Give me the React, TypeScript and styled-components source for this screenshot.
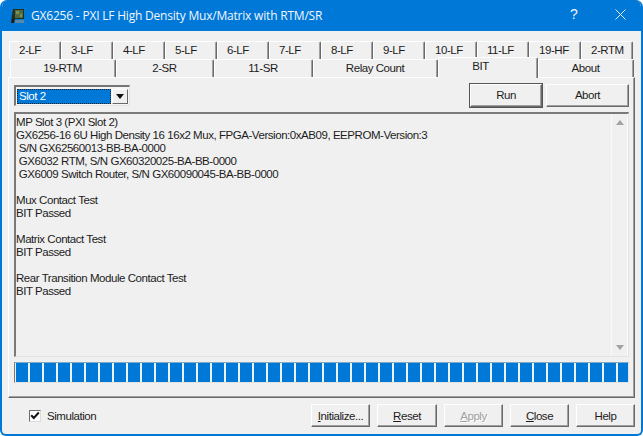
import React from 'react'
import styled, { createGlobalStyle } from 'styled-components'

const GlobalStyle = createGlobalStyle`
  html, body {
    margin: 0;
    padding: 0;
    background: #ffffff;
  }
  * {
    box-sizing: border-box;
  }
`

const Window = styled.div`
  width: 643px;
  height: 436px;
  display: flex;
  flex-direction: column;
  background: #f0f0f0;
  border: 2px solid #0078d7;
  border-top: 0;
  border-radius: 7px 7px 6px 6px;
  overflow: hidden;
  font-family: 'Liberation Sans', Arial, sans-serif;
  font-size: 11.5px;
  letter-spacing: -0.45px;
  color: #1c1c1c;
`

const TitleBar = styled.div`
  height: 31px;
  margin: 0 -2px;
  padding: 0 0 0 10px;
  display: flex;
  align-items: center;
  flex-shrink: 0;
  background: #0078d7;
  color: #f0f6fc;
  letter-spacing: 0;
`

const TitleText = styled.div`
  flex: 1;
  margin-left: 5px;
  font-family: 'Open Sans', 'Liberation Sans', sans-serif;
  font-size: 12px;
  letter-spacing: -0.2px;
`

const TitleGlyph = styled.div`
  width: 46px;
  margin-bottom: 3px;
  text-align: center;
  font-size: 14px;
`

const CloseGlyph = styled.div`
  width: 46px;
  margin-bottom: 2px;
  display: flex;
  justify-content: center;
`

const Content = styled.div`
  flex: 1;
  display: flex;
  flex-direction: column;
  padding: 10px 6px 0 6px;
`

const TabRow = styled.div<{ $inset: number }>`
  display: flex;
  height: 18px;
  align-items: flex-end;
  padding-left: ${(p) => p.$inset}px;
`

const Tab = styled.div<{ $width: number; $active?: boolean; $leading?: boolean }>`
  width: ${(p) => p.$width}px;
  height: ${(p) => (p.$active ? 21 : 18)}px;
  flex-shrink: 0;
  display: flex;
  align-items: center;
  justify-content: ${(p) => (p.$leading ? 'flex-start' : 'center')};
  padding-left: ${(p) => (p.$leading ? 9 : 0)}px;
  padding-right: ${(p) => (p.$active ? 15 : 1)}px;
  padding-bottom: ${(p) => (p.$active ? 4 : 1)}px;
  background: #f0f0f0;
  border-top: 1px solid #ffffff;
  border-left: 1px solid #ffffff;
  border-right: 1px solid #6a6a6a;
  box-shadow: inset -1px 0 0 #a0a0a0;
  border-radius: 2px 2px 0 0;
  margin-bottom: ${(p) => (p.$active ? -1 : 0)}px;
  position: relative;
  z-index: ${(p) => (p.$active ? 2 : 1)};
`

const Panel = styled.div`
  height: 321px;
  width: 627px;
  padding: 6px 5px 0 5px;
  display: flex;
  flex-direction: column;
  border-top: 1px solid #ffffff;
  border-left: 1px solid #ffffff;
  border-right: 1px solid #696969;
  border-bottom: 1px solid #696969;
  box-shadow: inset -1px -1px 0 #a0a0a0;
`

const TopControls = styled.div`
  display: flex;
  align-items: center;
  height: 22px;
`

const Combo = styled.div`
  width: 116px;
  height: 21px;
  display: flex;
  padding: 2px 1px 1px 1px;
  background: #f6f6f6;
  border-top: 2px solid #767676;
  border-left: 2px solid #767676;
  border-right: 1px solid #e3e3e3;
  border-bottom: 1px solid #e3e3e3;
  margin-right: auto;
`

const ComboValue = styled.div`
  flex: 1;
  padding-left: 2px;
  line-height: 14px;
  color: #ffffff;
  background: #0078d7;
  outline: 1px dotted #222;
  outline-offset: -1px;
`

const ComboArrow = styled.div`
  width: 16px;
  margin-left: 1px;
  display: flex;
  align-items: center;
  justify-content: center;
  background: #f0f0f0;
  border-top: 1px solid #ffffff;
  border-left: 1px solid #ffffff;
  border-right: 1px solid #696969;
  border-bottom: 1px solid #696969;
`

const ArrowDown = styled.div<{ $color?: string }>`
  width: 0;
  height: 0;
  border-left: 4px solid transparent;
  border-right: 4px solid transparent;
  border-top: 5px solid ${(p) => p.$color ?? '#111'};
`

const ArrowUp = styled.div`
  width: 0;
  height: 0;
  border-left: 4px solid transparent;
  border-right: 4px solid transparent;
  border-bottom: 5px solid #a3a3a3;
`

const Button = styled.div<{ $width: number; $default?: boolean; $disabled?: boolean }>`
  width: ${(p) => p.$width}px;
  height: 23px;
  flex-shrink: 0;
  display: flex;
  align-items: center;
  justify-content: center;
  color: ${(p) => (p.$disabled ? '#a0a0a0' : '#1c1c1c')};
  text-shadow: ${(p) => (p.$disabled ? '1px 1px 0 #ffffff' : 'none')};
  background: #f0f0f0;
  border-top: 1px solid #ffffff;
  border-left: 1px solid #ffffff;
  border-right: 1px solid #696969;
  border-bottom: 1px solid #696969;
  box-shadow: inset -1px -1px 0 #a0a0a0;
  outline: ${(p) => (p.$default ? '1px solid #555' : 'none')};
`

const RunButton = styled(Button)`
  margin-right: 4px;
`

const TextArea = styled.div`
  height: 245px;
  margin-top: 6px;
  display: flex;
  border-top: 2px solid #7a7a7a;
  border-left: 2px solid #7a7a7a;
  border-right: 1px solid #e3e3e3;
  border-bottom: 1px solid #e3e3e3;
`

const TextLines = styled.div`
  flex: 1;
  padding: 2px 0 0 0;
  line-height: 13px;
  white-space: pre;
`

const Line = styled.div`
  height: 13px;
`

const ScrollBar = styled.div`
  width: 17px;
  display: flex;
  flex-direction: column;
  justify-content: space-between;
  align-items: center;
  padding: 6px 0;
  background: #f0f0f0;
  border-left: 1px solid #fafafa;
  border-right: 1px solid #fafafa;
`

const Progress = styled.div`
  height: 21px;
  margin-top: 5px;
  display: flex;
  gap: 2px;
  padding: 0 1px;
  overflow: hidden;
  background: #eaf3fa;
  border-top: 1px solid #7fa9c8;
  border-left: 1px solid #7a7a7a;
  border-right: 1px solid #e3e3e3;
  border-bottom: 1px solid #e3e3e3;
`

const Segment = styled.div`
  width: 12px;
  flex-shrink: 0;
  background: #0078d7;
`

const Footer = styled.div`
  flex: 1;
  display: flex;
  align-items: flex-start;
  padding: 6px 0 0 0;
  gap: 7px;
  width: 627px;
`

const SimulationField = styled.label`
  display: flex;
  align-items: center;
  gap: 6px;
  height: 23px;
  padding-left: 21px;
  margin-right: auto;
`

const CheckBox = styled.div`
  width: 12px;
  height: 12px;
  display: flex;
  align-items: center;
  justify-content: center;
  background: #ffffff;
  border-top: 1px solid #6d6d6d;
  border-left: 1px solid #6d6d6d;
  border-right: 1px solid #dcdcdc;
  border-bottom: 1px solid #dcdcdc;
`

const AccessKey = styled.span`
  text-decoration: underline;
`

const BoardIcon = () => (
  <svg width="16" height="16" viewBox="0 0 16 16">
    <path d="M3 1h11v10H3z" fill="#26301f" />
    <path d="M5 2h8v8H5z" fill="#4e6b3b" />
    <path d="M6 3h3v3H6zM10 6h2v3h-2z" fill="#76905e" />
    <path d="M3 1L1 15h3l1-4H3z" fill="#1c211a" />
    <path d="M5 12h9v3H5z" fill="#5c88a8" />
  </svg>
)

const CloseIcon = () => (
  <svg width="11" height="11" viewBox="0 0 11 11">
    <path d="M0.5 0.5l10 10M10.5 0.5l-10 10" stroke="#e6f1fb" strokeWidth="1" fill="none" />
  </svg>
)

const CheckIcon = () => (
  <svg width="10" height="10" viewBox="0 0 10 10">
    <path d="M1.2 4.2l2.6 2.8 5-5.5" stroke="#111" strokeWidth="2" fill="none" />
  </svg>
)

const TOP_TABS = ['2-LF', '3-LF', '4-LF', '5-LF', '6-LF', '7-LF', '8-LF', '9-LF', '10-LF', '11-LF', '19-HF', '2-RTM']

const LOWER_TABS = [
  { label: '19-RTM', width: 106 },
  { label: '2-SR', width: 98 },
  { label: '11-SR', width: 99 },
  { label: 'Relay Count', width: 125 },
  { label: 'BIT', width: 100, active: true },
  { label: 'About', width: 96 },
]

const OUTPUT = [
  'MP Slot 3 (PXI Slot 2)',
  'GX6256-16 6U High Density 16 16x2 Mux, FPGA-Version:0xAB09, EEPROM-Version:3',
  ' S/N GX62560013-BB-BA-0000',
  ' GX6032 RTM, S/N GX60320025-BA-BB-0000',
  ' GX6009 Switch Router, S/N GX60090045-BA-BB-0000',
  '',
  'Mux Contact Test',
  'BIT Passed',
  '',
  'Matrix Contact Test',
  'BIT Passed',
  '',
  'Rear Transition Module Contact Test',
  'BIT Passed',
]

const SEGMENTS = Array.from({ length: 44 }, (_, i) => i)

export default function App() {
  return (
    <>
      <GlobalStyle />
      <Window>
        <TitleBar>
          <BoardIcon />
          <TitleText>GX6256 - PXI LF High Density Mux/Matrix with RTM/SR</TitleText>
          <TitleGlyph>?</TitleGlyph>
          <CloseGlyph>
            <CloseIcon />
          </CloseGlyph>
        </TitleBar>
        <Content>
          <TabRow $inset={1}>
            {TOP_TABS.map((tab) => (
              <Tab key={tab} $width={52} $leading>
                {tab}
              </Tab>
            ))}
          </TabRow>
          <TabRow $inset={2}>
            {LOWER_TABS.map((tab) => (
              <Tab key={tab.label} $width={tab.width} $active={tab.active}>
                {tab.label}
              </Tab>
            ))}
          </TabRow>
          <Panel>
            <TopControls>
              <Combo>
                <ComboValue>Slot 2</ComboValue>
                <ComboArrow>
                  <ArrowDown />
                </ComboArrow>
              </Combo>
              <RunButton $width={72} $default>
                Run
              </RunButton>
              <Button $width={83}>Abort</Button>
            </TopControls>
            <TextArea>
              <TextLines>
                {OUTPUT.map((line, i) => (
                  <Line key={i}>{line}</Line>
                ))}
              </TextLines>
              <ScrollBar>
                <ArrowUp />
                <ArrowDown $color="#a3a3a3" />
              </ScrollBar>
            </TextArea>
            <Progress>
              {SEGMENTS.map((s) => (
                <Segment key={s} />
              ))}
            </Progress>
          </Panel>
          <Footer>
            <SimulationField>
              <CheckBox>
                <CheckIcon />
              </CheckBox>
              Simulation
            </SimulationField>
            <Button $width={59}>
              <span>
                <AccessKey>I</AccessKey>nitialize...
              </span>
            </Button>
            <Button $width={60}>
              <span>
                <AccessKey>R</AccessKey>eset
              </span>
            </Button>
            <Button $width={59} $disabled>
              <span>
                <AccessKey>A</AccessKey>pply
              </span>
            </Button>
            <Button $width={59}>
              <span>
                <AccessKey>C</AccessKey>lose
              </span>
            </Button>
            <Button $width={59}>Help</Button>
          </Footer>
        </Content>
      </Window>
    </>
  )
}
